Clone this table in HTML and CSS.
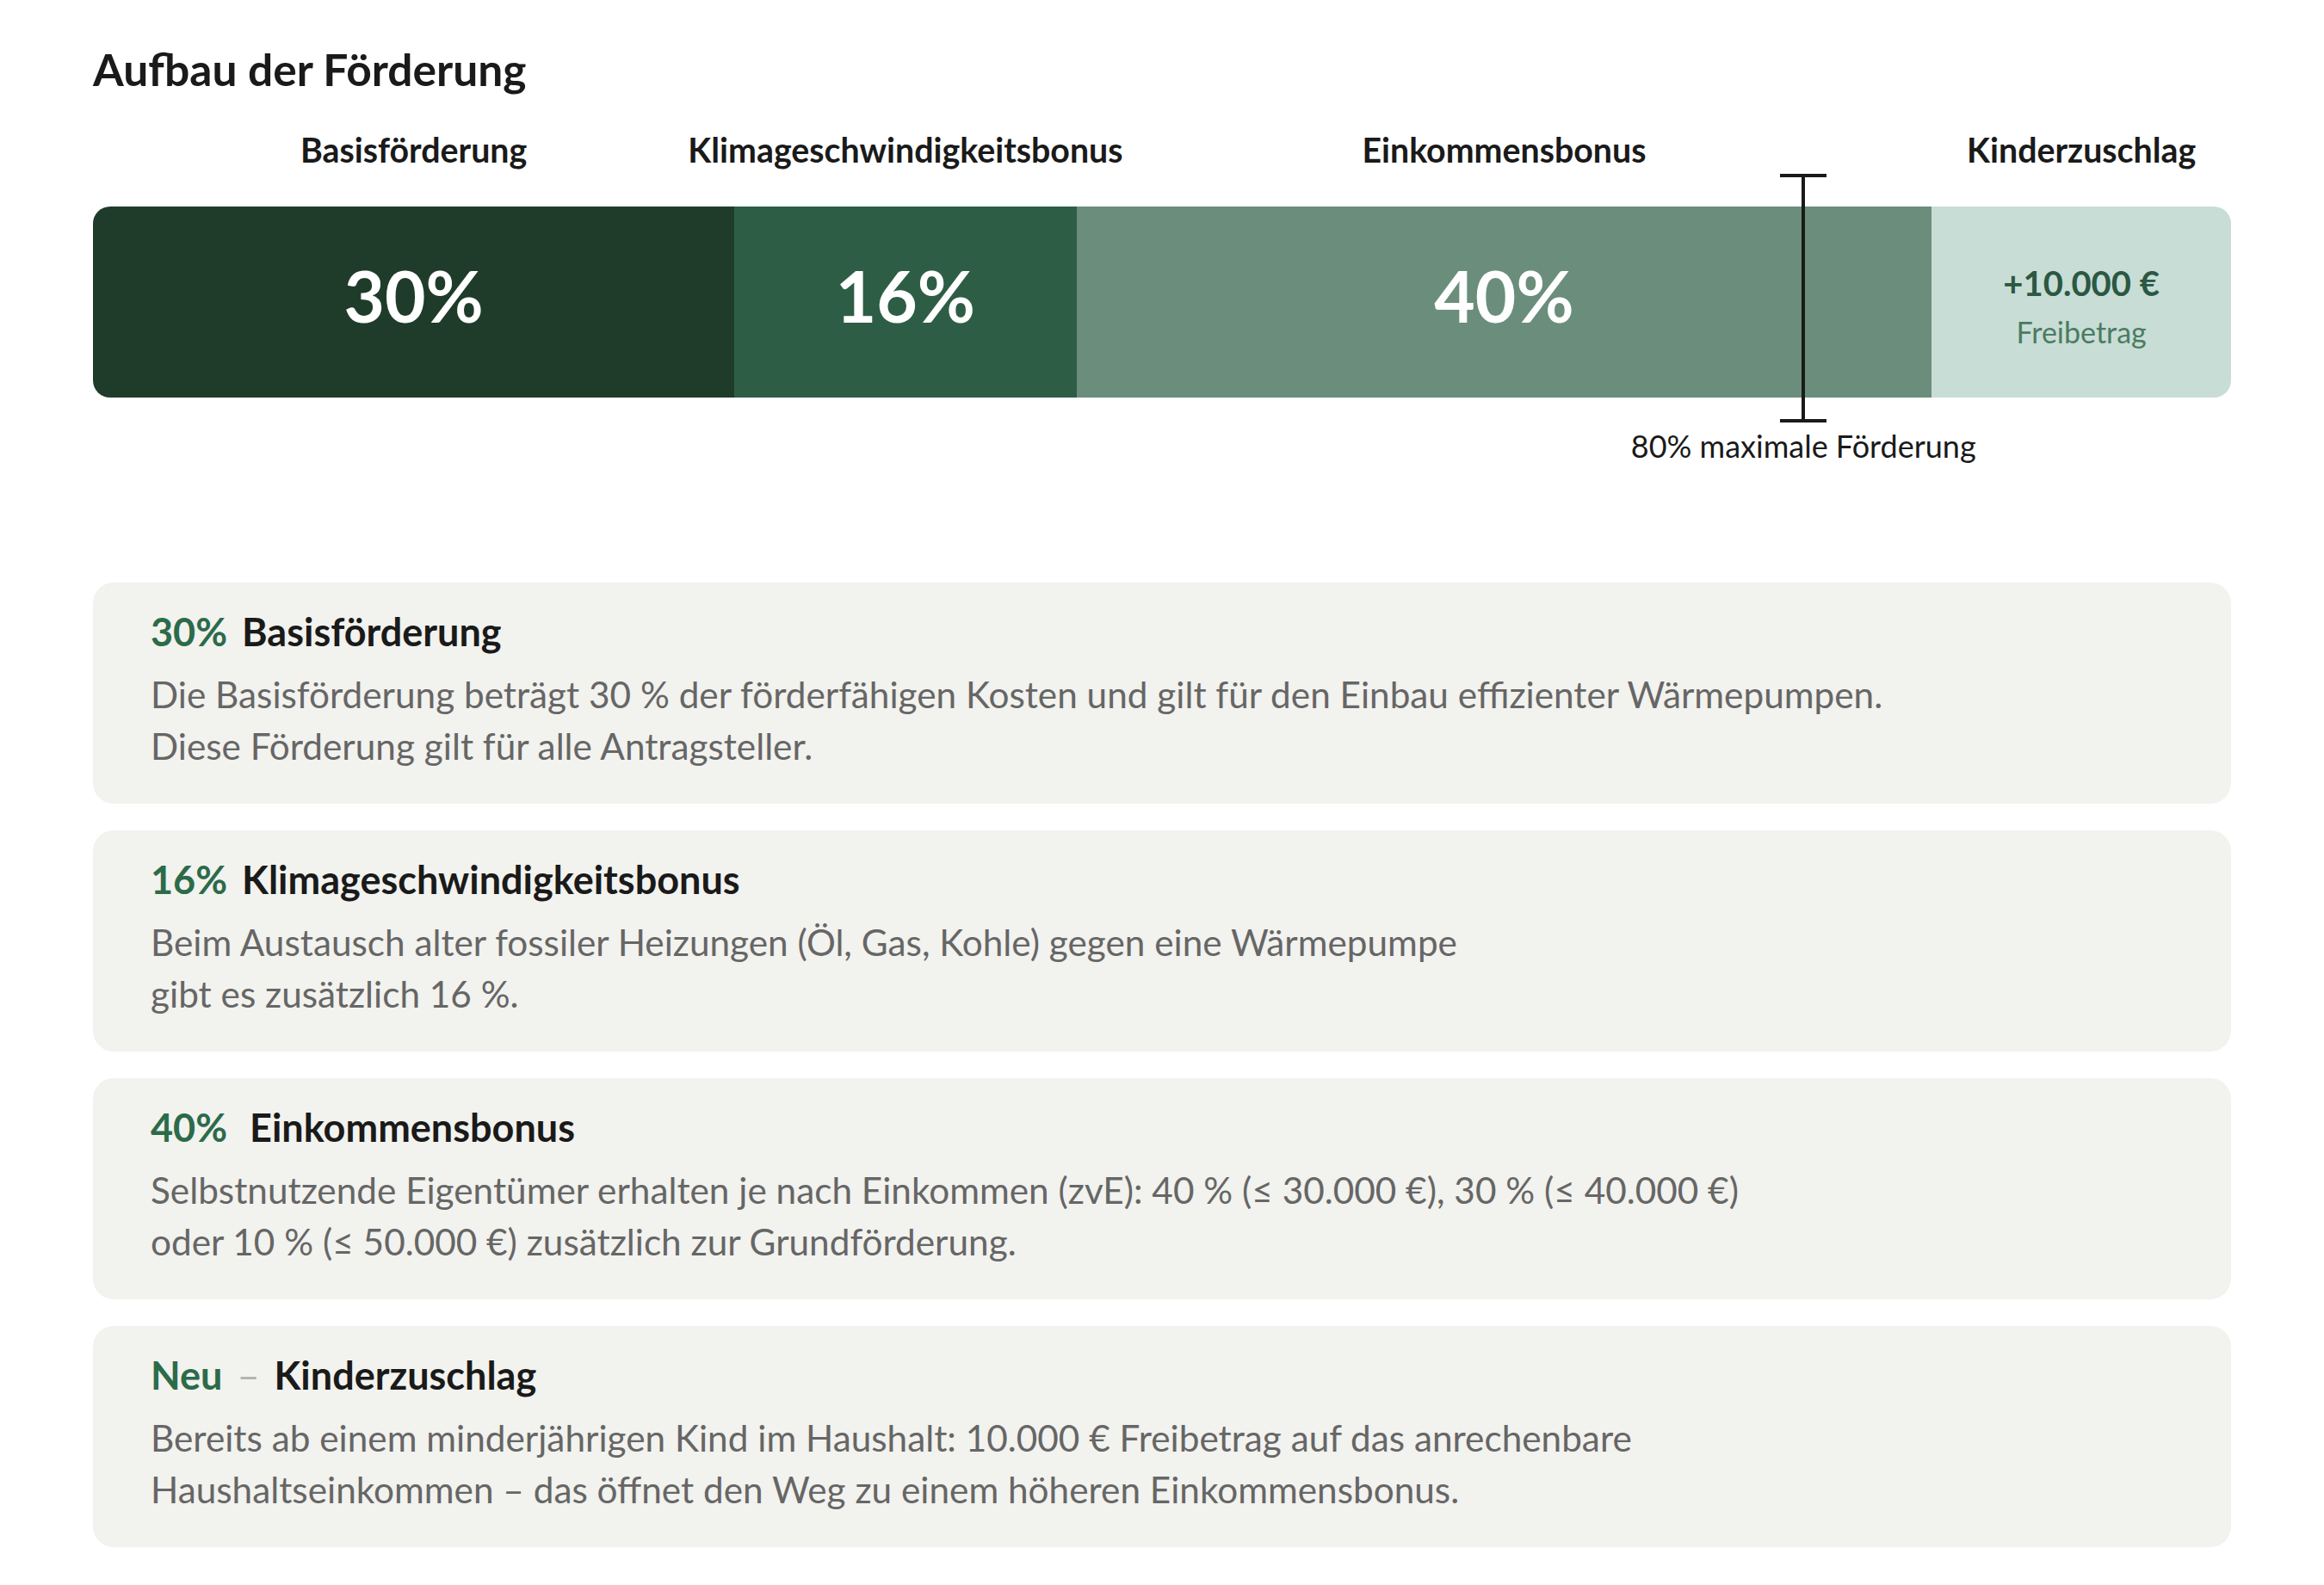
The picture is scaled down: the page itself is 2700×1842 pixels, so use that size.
FILE: index.html
```html
<!DOCTYPE html>
<html lang="de">
<head>
<meta charset="utf-8">
<title>Aufbau der Förderung</title>
<link rel="stylesheet" href="styles.css">
</head>
<body>
<main class="page">
  <h1 class="title">Aufbau der Förderung</h1>

  <div class="chart">
    <div class="labels">
      <div class="label s30"><span>Basisförderung</span></div>
      <div class="label s16"><span>Klimageschwindigkeitsbonus</span></div>
      <div class="label s40"><span>Einkommensbonus</span></div>
      <div class="label s14"><span>Kinderzuschlag</span></div>
    </div>

    <div class="bar">
      <div class="seg seg-base s30">30%</div>
      <div class="seg seg-klima s16">16%</div>
      <div class="seg seg-income s40">40%</div>
      <div class="seg seg-kids s14">
        <span class="amount">+10.000 €</span>
        <span class="amount-sub">Freibetrag</span>
      </div>
      <div class="bracket" aria-hidden="true">
        <span class="bracket-cap"></span>
        <span class="bracket-stem"></span>
        <span class="bracket-cap"></span>
      </div>
    </div>

    <div class="max-note"><span class="max-note-text">80% maximale Förderung</span></div>
  </div>

  <section class="cards">
    <article class="card">
      <h2 class="card-head"><span class="pct">30%</span><span class="card-title">Basisförderung</span></h2>
      <p class="card-text">Die Basisförderung beträgt 30 % der förderfähigen Kosten und gilt für den Einbau effizienter Wärmepumpen.<br>Diese Förderung gilt für alle Antragsteller.</p>
    </article>
    <article class="card">
      <h2 class="card-head"><span class="pct">16%</span><span class="card-title">Klimageschwindigkeitsbonus</span></h2>
      <p class="card-text">Beim Austausch alter fossiler Heizungen (Öl, Gas, Kohle) gegen eine Wärmepumpe<br>gibt es zusätzlich 16 %.</p>
    </article>
    <article class="card">
      <h2 class="card-head"><span class="pct">40%</span><span class="card-title spaced">Einkommensbonus</span></h2>
      <p class="card-text">Selbstnutzende Eigentümer erhalten je nach Einkommen (zvE): 40 % (≤ 30.000 €), 30 % (≤ 40.000 €)<br>oder 10 % (≤ 50.000 €) zusätzlich zur Grundförderung.</p>
    </article>
    <article class="card">
      <h2 class="card-head"><span class="pct">Neu</span><span class="dash">–</span><span class="card-title">Kinderzuschlag</span></h2>
      <p class="card-text">Bereits ab einem minderjährigen Kind im Haushalt: 10.000 € Freibetrag auf das anrechenbare<br>Haushaltseinkommen – das öffnet den Weg zu einem höheren Einkommensbonus.</p>
    </article>
  </section>
</main>
</body>
</html>
```

FILE: styles.css
```css
* {
  box-sizing: border-box;
}

html, body {
  margin: 0;
  padding: 0;
  background: #ffffff;
}

body {
  font-family: Lato, "Noto Sans", "Liberation Sans", sans-serif;
  color: #1a1a1a;
}

.page {
  padding: 50px 108px 40px;
}

.title {
  margin: 0;
  font-size: 51.5px;
  line-height: 1.2;
  font-weight: 700;
  color: #1a1a1a;
}

/* chart */
.chart {
  display: flex;
  flex-direction: column;
}

.labels {
  display: flex;
  margin-top: 38.6px;
}

.label {
  display: flex;
  justify-content: center;
  min-width: 0;
  font-size: 39.3px;
  line-height: 1.2;
  font-weight: 700;
  color: #1a1a1a;
  white-space: nowrap;
}

.s30 { flex: 30 1 0; }
.s16 { flex: 16 1 0; }
.s40 { flex: 40 1 0; }
.s14 { flex: 14 1 0; }

.bar {
  position: relative;
  display: flex;
  height: 222px;
  margin-top: 42.4px;
}

.seg {
  display: flex;
  align-items: center;
  justify-content: center;
  min-width: 0;
  padding-bottom: 15px;
  color: #ffffff;
  font-size: 82px;
  font-weight: 700;
  line-height: 1.2;
}

.seg-base {
  background: #1f3c2a;
  border-radius: 20px 0 0 20px;
}

.seg-klima {
  background: #2d5e45;
}

.seg-income {
  background: #6a8e7b;
}

.seg-kids {
  flex-direction: column;
  background: #c8ddd5;
  border-radius: 0 20px 20px 0;
  padding-bottom: 0;
  padding-top: 9px;
}

.amount {
  font-size: 40px;
  font-weight: 700;
  line-height: 1.2;
  color: #2b5843;
}

.amount-sub {
  margin-top: 13px;
  font-size: 34px;
  font-weight: 400;
  line-height: 1.2;
  color: #4b7b63;
}

.bracket {
  position: absolute;
  top: -38px;
  left: calc(80% - 27px);
  width: 54px;
  height: 289px;
  display: flex;
  flex-direction: column;
  align-items: center;
}

.bracket-cap {
  width: 54px;
  height: 4px;
  background: #1a1a1a;
}

.bracket-stem {
  flex: 1;
  width: 4px;
  background: #1a1a1a;
}

.max-note {
  display: flex;
  justify-content: center;
  width: 0;
  margin-left: 80%;
  margin-top: 35px;
}

.max-note-text {
  white-space: nowrap;
  font-size: 36px;
  line-height: 1.2;
  font-weight: 400;
  color: #1a1a1a;
}

/* cards */
.cards {
  display: flex;
  flex-direction: column;
  gap: 31px;
  margin-top: 137px;
}

.card {
  background: #f2f2ee;
  border-radius: 24px;
  padding: 30px 67px 37px;
  height: 257px;
}

.card-head {
  display: flex;
  align-items: baseline;
  gap: 17px;
  margin: 0 0 16px;
  font-size: 45px;
  line-height: 1.2;
  font-weight: 700;
}

.pct {
  color: #2c6b4a;
}

.card-title {
  color: #1a1a1a;
}

.card-title.spaced {
  margin-left: 9px;
}

.dash {
  color: #b4b4b0;
  font-weight: 400;
}

.card-text {
  margin: 0;
  font-size: 42.3px;
  line-height: 60px;
  color: #666666;
}
```
